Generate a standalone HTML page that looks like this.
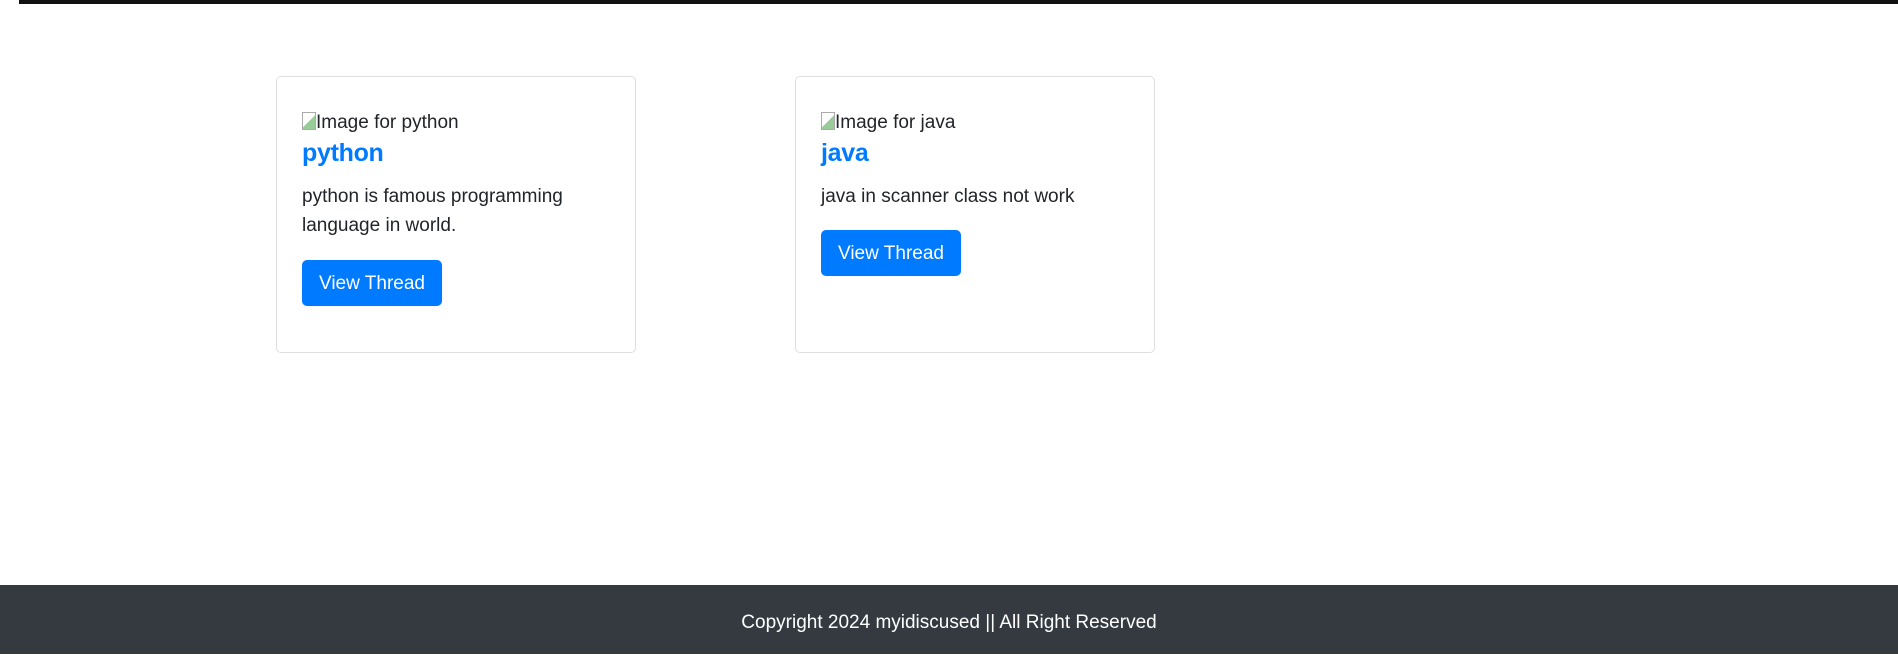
<!DOCTYPE html>
<html><head><style>
body{margin:0;width:1898px;height:654px;position:relative;background:#fff;font-family:"Liberation Sans",sans-serif;color:#212529;overflow:hidden}
.bar{position:absolute;left:19px;top:0;width:1879px;height:4px;background:#111}
.card{position:absolute;top:76px;width:360px;height:277px;border:1px solid #dfdfdf;border-radius:5px;box-sizing:border-box}
.alt{position:absolute;left:25px;top:34px;font-size:19px;line-height:24px}
.alt i{display:inline-block;width:14px;height:18px;border:1px solid #aaa;vertical-align:-2px;background:linear-gradient(135deg,#fff 50%,#9c9 50%);box-sizing:border-box}
.t{position:absolute;left:25px;top:62px;font-size:25px;color:#007bff;font-weight:bold;letter-spacing:-0.3px}
.p{position:absolute;left:25px;top:105px;font-size:19px;line-height:29px;width:310px}
.btn{position:absolute;left:25px;width:140px;height:46px;background:#007bff;color:#fff;border-radius:5px;font-size:19px;line-height:48px;text-align:center}
.foot{position:absolute;left:0;top:585px;width:1898px;height:69px;background:#343a40;color:#fff;font-size:19px;text-align:center;line-height:75px}
</style></head><body>
<div class="bar"></div>
<div class="card" style="left:276px">
<div class="alt"><i></i>Image for python</div>
<div class="t">python</div>
<div class="p">python is famous programming language in world.</div>
<div class="btn" style="top:183px">View Thread</div>
</div>
<div class="card" style="left:795px">
<div class="alt"><i></i>Image for java</div>
<div class="t">java</div>
<div class="p">java in scanner class not work</div>
<div class="btn" style="top:153px">View Thread</div>
</div>
<div class="foot">Copyright 2024 myidiscused || All Right Reserved</div>
</body></html>
